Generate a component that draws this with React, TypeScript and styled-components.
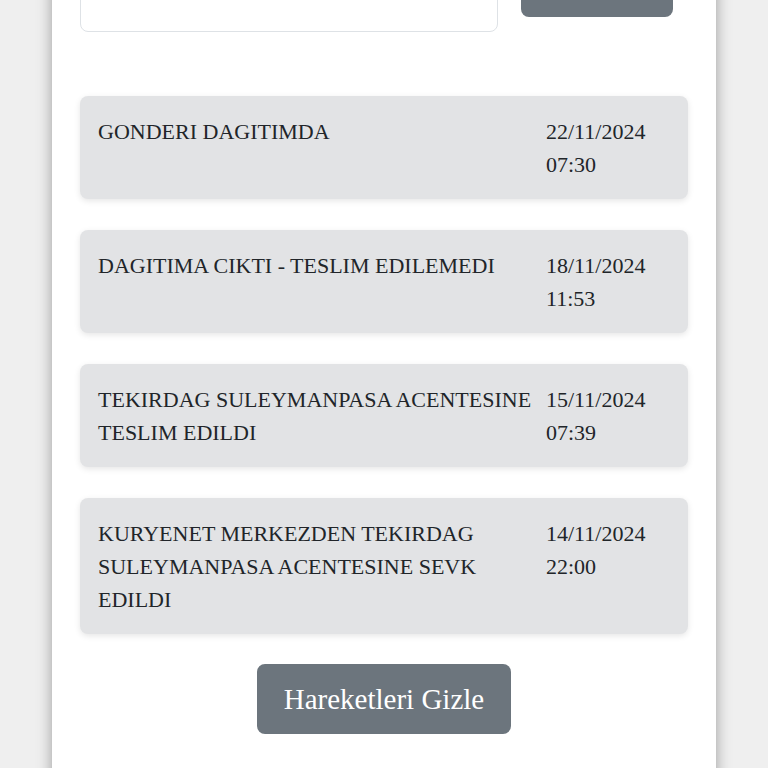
import React from 'react';
import styled, { createGlobalStyle } from 'styled-components';

const GlobalStyle = createGlobalStyle`
  html, body {
    margin: 0;
    padding: 0;
    background-color: #efefef;
    font-family: 'Liberation Serif', 'Times New Roman', serif;
    color: #212529;
  }
`;

const Card = styled.main`
  width: 664px;
  min-height: 820px;
  margin: -28px auto 0;
  padding: 0 28px 40px;
  box-sizing: border-box;
  background-color: #fff;
  box-shadow: 0 0 14px rgba(0, 0, 0, 0.35);
`;

const SearchRow = styled.form`
  display: flex;
  align-items: flex-start;
  gap: 23px;
`;

const SearchInput = styled.input`
  width: 418px;
  height: 60px;
  box-sizing: border-box;
  border: 1px solid #dee2e6;
  border-radius: 8px;
  font-family: inherit;
  font-size: 22px;
  padding: 0 16px;
`;

const SearchButton = styled.button`
  width: 152px;
  height: 45px;
  border: none;
  border-radius: 8px;
  background-color: #6c757d;
  color: #fff;
  font-family: inherit;
  font-size: 22px;
`;

const MovementList = styled.ul`
  list-style: none;
  margin: 64px 0 0;
  padding: 0;
  display: flex;
  flex-direction: column;
  gap: 31px;
`;

const MovementItem = styled.li`
  display: grid;
  grid-template-columns: 440px 1fr;
  column-gap: 8px;
  padding: 18.5px 18px;
  background-color: #e2e3e5;
  border-radius: 8px;
  box-shadow: 0 2px 6px rgba(0, 0, 0, 0.1);
  font-size: 22px;
  line-height: 33px;
`;

const Description = styled.span``;

const DateTime = styled.span`
  display: flex;
  flex-direction: column;
`;

const Footer = styled.div`
  display: flex;
  justify-content: center;
  margin-top: 30px;
`;

const ToggleButton = styled.button`
  height: 70px;
  padding: 0 27px;
  border: none;
  border-radius: 8px;
  background-color: #6c757d;
  color: #fff;
  font-family: inherit;
  font-size: 29px;
  cursor: pointer;
`;

const movements = [
  { text: 'GONDERI DAGITIMDA', date: '22/11/2024', time: '07:30' },
  { text: 'DAGITIMA CIKTI - TESLIM EDILEMEDI', date: '18/11/2024', time: '11:53' },
  { text: 'TEKIRDAG SULEYMANPASA ACENTESINE TESLIM EDILDI', date: '15/11/2024', time: '07:39' },
  {
    text: 'KURYENET MERKEZDEN TEKIRDAG SULEYMANPASA ACENTESINE SEVK EDILDI',
    date: '14/11/2024',
    time: '22:00',
  },
];

function App() {
  return (
    <>
      <GlobalStyle />
      <Card>
        <SearchRow onSubmit={(e) => e.preventDefault()}>
          <SearchInput type="text" />
          <SearchButton type="submit" />
        </SearchRow>
        <MovementList>
          {movements.map((m) => (
            <MovementItem key={m.date + m.time}>
              <Description>{m.text}</Description>
              <DateTime>
                <span>{m.date}</span>
                <span>{m.time}</span>
              </DateTime>
            </MovementItem>
          ))}
        </MovementList>
        <Footer>
          <ToggleButton type="button">Hareketleri Gizle</ToggleButton>
        </Footer>
      </Card>
    </>
  );
}

export default App;
